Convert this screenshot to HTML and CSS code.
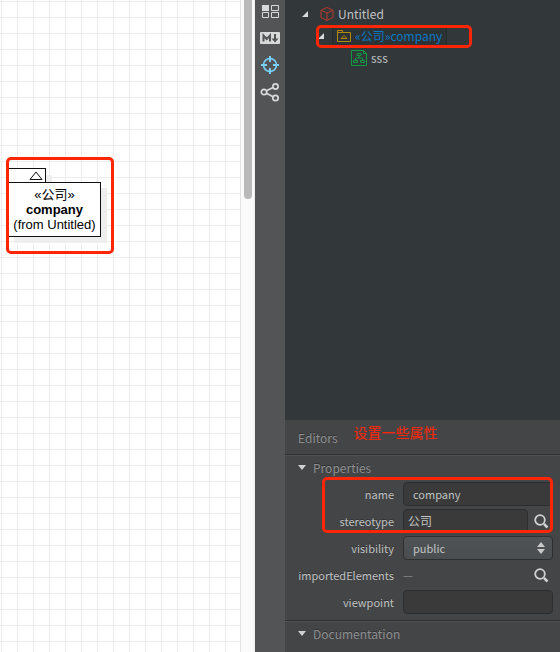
FILE: index.html
```html
<!DOCTYPE html>
<html lang="zh">
<head>
<meta charset="utf-8">
<title>Model editor</title>
<link rel="stylesheet" href="styles.css">
</head>
<body>
<div class="app">
  <main class="canvas">
    <div class="package">
      <div class="package-tab"><svg width="14" height="9" viewBox="0 0 14 9"><path d="M1 8.500 7 1l6 7.500z" fill="#fff" stroke="#111"/></svg></div>
      <div class="package-body">
        <div>«公司»</div>
        <strong>company</strong>
        <div>(from Untitled)</div>
      </div>
    </div>
    <div class="mark mark-package"></div>
  </main>
  <div class="scrollbar"><div class="thumb"></div></div>
  <nav class="toolbar">
    <button class="tool" aria-label="Diagrams"><svg width="20" height="20" viewBox="0 0 20 20" fill="none" stroke="#d8dada"><path d="M2 3h7v6H2z" fill="#d8dada" stroke="none"/><path d="M11.500 3.500h7v5h-7zM2.500 10.500h6v5h-6zM11.500 10.500h7v5h-7z"/></svg></button>
    <button class="tool" aria-label="Markdown"><svg width="20" height="20" viewBox="0 0 20 20"><rect y="3" width="20" height="12" rx="1" fill="#d8dada"/><path d="M3.500 12.500V6.500l3.250 3.500L10 6.500v6M15 5v6" fill="none" stroke="#535455" stroke-width="2"/><path d="M11.500 9.500h7L15 13.500z" fill="#535455"/></svg></button>
    <button class="tool" aria-label="Locate"><svg width="20" height="20" viewBox="0 0 20 20" fill="none" stroke="#79d1f8"><circle cx="10" cy="9" r="6.500" stroke-width="1.500"/><path d="M10 0v6M10 12v6M1 9h6M13 9h6" stroke-width="2"/></svg></button>
    <button class="tool" aria-label="Share"><svg width="20" height="20" viewBox="0 0 20 20" fill="none" stroke="#d8dada" stroke-width="1.700"><circle cx="4" cy="9" r="2.700"/><circle cx="15.500" cy="3.500" r="2.600"/><circle cx="15.500" cy="15" r="2.700"/><path d="m6.500 7.700 6.500-3.100M6.500 10.300l6.500 3.400"/></svg></button>
  </nav>
  <aside class="side">
    <section class="tree">
      <div class="node"><svg class="arrow" width="6" height="6" viewBox="0 0 6 6"><path d="M6 0v6H0z" fill="#d8dada"/></svg><svg width="14" height="14" viewBox="0 0 14 14" fill="none" stroke="#b83a2d" stroke-linejoin="round"><path d="m7 .5 6 2.800v7.200l-6 3-6-3V3.300zM1 3.300l6 2.700 6-2.700M7 6v7.500"/></svg><span>Untitled</span></div>
      <div class="node level-2"><svg class="arrow" width="6" height="6" viewBox="0 0 6 6"><path d="M6 0v6H0z" fill="#d8dada"/></svg><div class="selected"><svg width="14" height="14" viewBox="0 0 14 14" fill="none" stroke="#b08b08"><path d="M.5 12.500v-11h5v2h8v9zM.5 3.500h5M4 9.500h6L7 6.500z"/></svg><span>«公司»company</span></div><div class="mark mark-node"></div></div>
      <div class="node level-3"><svg width="16" height="16" viewBox="0 0 16 16" fill="none" stroke="#109b43"><path d="M.5.500h12l3 3v12H.500z"/><path d="M12.500.500v3h3M6 3.500h4v2H6zM2.500 10.500h4v2h-4zM9.500 10.500h4v2h-4zM8 5.500V8M4.500 10.500V8h7v2.500"/></svg><span>sss</span></div>
    </section>
    <section class="editors">
      <header class="editors-head"><span>Editors</span><span class="note">设置一些属性</span></header>
      <div class="section">
        <h2 class="title"><svg width="8" height="5" viewBox="0 0 8 5"><path d="M0 0h8L4 5z" fill="#d0d2d2"/></svg>Properties</h2>
        <div class="row"><label for="name">name</label><input id="name" class="field" value="company"></div>
        <div class="row"><label for="stereotype">stereotype</label><input id="stereotype" class="field snug" value="公司"><button class="search" aria-label="Find stereotype"><svg width="16" height="16" viewBox="0 0 16 16" fill="none" stroke="#d0d2d2"><circle cx="7" cy="7" r="4.800" stroke-width="1.800"/><path d="m11 11 3.500 3.500" stroke-width="2.500"/></svg></button></div>
        <div class="row"><label for="visibility">visibility</label><div class="choice"><select id="visibility" class="field"><option>public</option></select><svg class="spin" width="8" height="12" viewBox="0 0 8 12"><path d="M0 5h8L4 0zM0 7h8l-4 5z" fill="#c8caca"/></svg></div></div>
        <div class="row"><span class="label">importedElements</span><span class="empty">—</span><button class="search" aria-label="Find elements"><svg width="16" height="16" viewBox="0 0 16 16" fill="none" stroke="#d0d2d2"><circle cx="7" cy="7" r="4.800" stroke-width="1.800"/><path d="m11 11 3.500 3.500" stroke-width="2.500"/></svg></button></div>
        <div class="row"><label for="viewpoint">viewpoint</label><input id="viewpoint" class="field"></div>
        <div class="mark mark-fields"></div>
      </div>
      <div class="section">
        <h2 class="title"><svg width="8" height="5" viewBox="0 0 8 5"><path d="M0 0h8L4 5z" fill="#d0d2d2"/></svg>Documentation</h2>
      </div>
    </section>
  </aside>
</div>
</body>
</html>
```
FILE: styles.css
```css
* { box-sizing: border-box; }
body { margin: 0; font: 12px/16px "Noto Sans CJK SC", sans-serif; color: #c1c3c3; }
svg { display: block; flex: none; }
button { padding: 0; border: 0; background: none; }

.app { display: grid; grid-template-columns: 1fr 14px 30px 275px; height: 100vh; overflow: hidden; }

.canvas {
  position: relative;
  background-color: #fff;
  background-image: linear-gradient(#ececec 1px, transparent 1px), linear-gradient(90deg, #ececec 1px, transparent 1px);
  background-position: 1px 1px;
  background-size: 16px 16px;
  border-right: 1px solid #e4e4e4;
}
.package { position: absolute; left: 8px; top: 168px; color: #000; font: 13px/15px "Liberation Sans", "Noto Sans CJK SC", sans-serif; text-align: center; }
.package-tab { width: 38px; height: 14px; padding: 2px 2px 0 0; display: flex; justify-content: flex-end; border: 1px solid #111; border-bottom: 0; background: #fff; box-shadow: 6px 7px #eee; }
.package-body { position: relative; width: 93px; padding: 4px 0; border: 1px solid #111; background: #fff; box-shadow: 6px 6px #eee; white-space: nowrap; }
.package-body strong { display: block; }

.mark { position: absolute; border: 3px solid #ff2606; border-radius: 5px; pointer-events: none; }
.mark-package { left: 6px; top: 157px; width: 108px; height: 97px; }
.mark-node { left: 31px; right: 88px; top: 0; height: 23px; }
.mark-fields { left: 37px; right: 7px; top: 22px; height: 56px; }

.scrollbar { background: #fafafa; border-right: 1px solid #eee; padding-left: 3px; }
.thumb { width: 8px; height: 199px; background: #b9b9b9; border-radius: 0 0 4px 4px; }

.toolbar { display: flex; flex-direction: column; align-items: center; gap: 7px; padding-top: 2px; background: #535455; }
.tool { width: 20px; height: 20px; }

.side { display: flex; flex-direction: column; min-width: 0; }
.tree { flex: 1; padding-top: 3px; background: #32373a; }
.node { position: relative; display: flex; align-items: center; gap: 4px; height: 22px; padding-left: 17px; }
.node .arrow { margin-right: 8px; }
.level-2 { padding-left: 33px; }
.level-3 { padding-left: 66px; }
.selected { display: flex; align-items: center; gap: 4px; height: 20px; margin-left: -4px; padding: 0 4px; border: 1px solid #252a2c; border-radius: 3px; background: #2d3234; color: #0879c5; }

.editors { background: #444547; }
.editors-head { display: flex; gap: 16px; height: 34px; padding: 10px 13px 0; color: #8e9091; text-shadow: 0 -1px #303133; }
.note { margin-top: -6px; font-size: 14px; color: #ff2606; text-shadow: none; }
.section { position: relative; padding-bottom: 5px; border-top: 1px solid #303133; box-shadow: inset 0 1px #505153; }
.section:last-child { padding-bottom: 6px; }
.title { display: flex; align-items: center; gap: 7px; height: 25px; margin: 0; padding-left: 13px; font-size: 12px; font-weight: 400; color: #8e9091; text-shadow: 0 -1px #303133; }
.row { display: flex; align-items: center; height: 27px; padding-right: 7px; font-size: 11px; }
.row label, .label { flex: none; width: 109px; margin-right: 9px; text-align: right; text-shadow: 0 -1px #303133; }
.field { flex: 1; width: 100%; min-width: 0; height: 24px; padding: 0 9px; border: 1px solid #2d2e2f; border-radius: 4px; background: #393a39; color: #c1c3c3; font: inherit; outline: 0; }
.field.snug { padding: 0 4px; font-size: 12px; }
.search { display: grid; place-items: center; flex: none; width: 20px; height: 20px; margin: 0 2px 0 3px; }
.choice { position: relative; flex: 1; }
select.field { display: block; appearance: none; background: linear-gradient(#505355, #4b4e50); }
.spin { position: absolute; right: 8px; top: 6px; }
.empty { flex: 1; color: #858788; }
```
